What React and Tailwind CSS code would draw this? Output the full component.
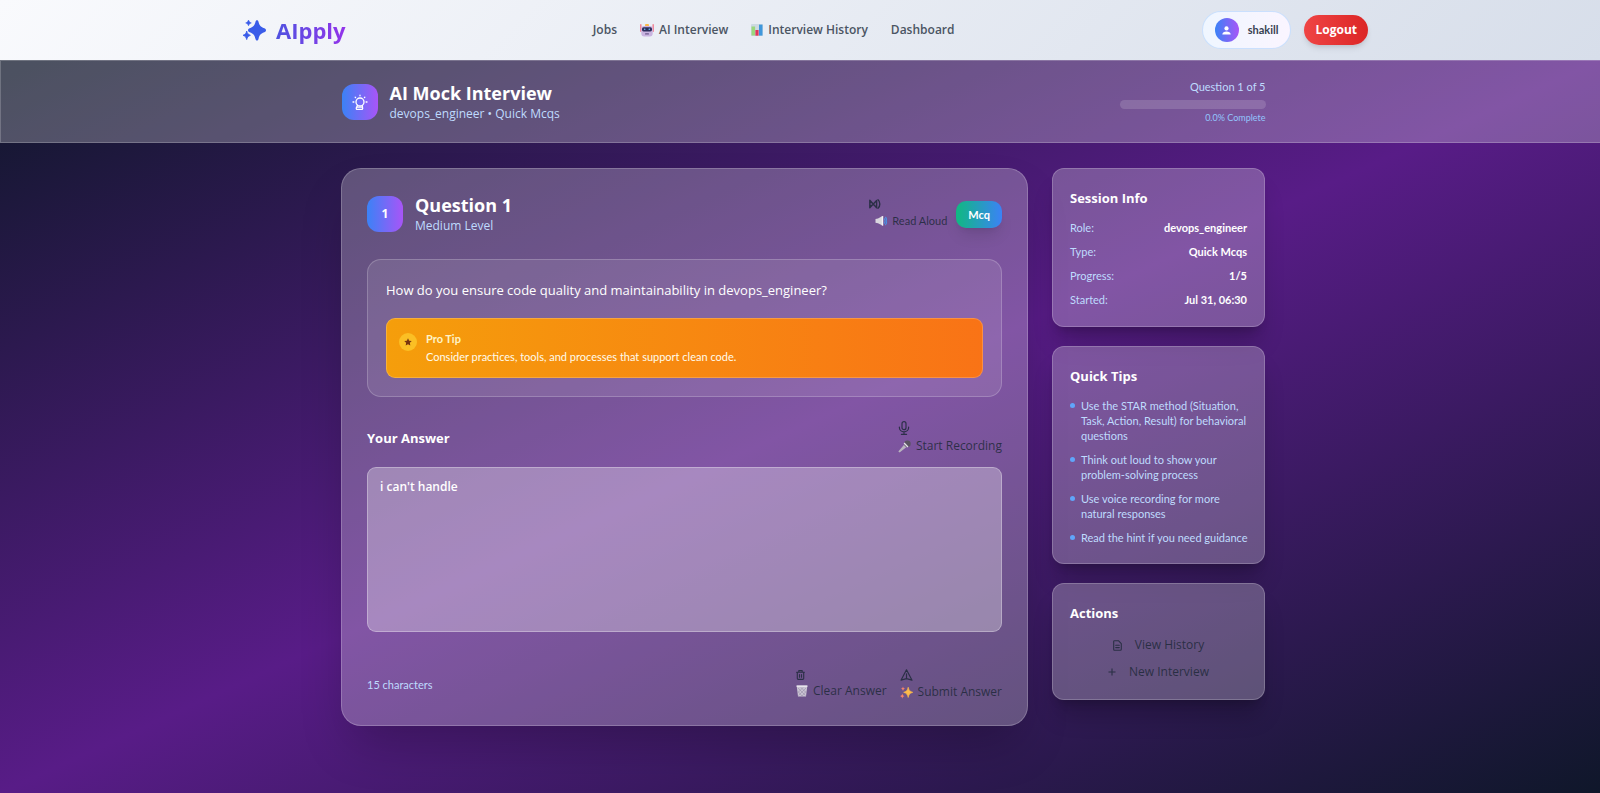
const panel = 'border border-white/20 bg-white/25';
const small = "font-['Lato','Open_Sans',sans-serif]";

function LogoIcon() {
  return (
    <svg className="h-[29px] w-[29px] text-[#3a5ce9]" viewBox="0 0 29 29" fill="currentColor" aria-hidden="true">
      <path d="M19 4.300c.9 0 1.300.7 1.500 1.500.9 3.700 1.900 4.900 5.800 6.500.9.400 1.700 1 1.700 2s-.8 1.600-1.700 2c-3.900 1.600-4.900 2.800-5.800 6.700-.2.800-.6 1.500-1.500 1.500s-1.300-.7-1.500-1.500c-.9-3.900-1.900-5.100-5.800-6.700-.9-.4-1.700-1-1.700-2s.8-1.600 1.700-2c3.900-1.600 4.900-2.800 5.800-6.500.2-.8.600-1.500 1.500-1.500z" />
      <path d="M10.500 4c.5 1.700 1 2.200 2.800 2.900-1.800.7-2.300 1.200-2.800 2.900-.5-1.700-1-2.200-2.800-2.900 1.800-.7 2.300-1.200 2.800-2.900z" stroke="currentColor" strokeWidth=".6" strokeLinejoin="round" />
      <path d="M8.700 15c.6 2.500 1.300 3.200 3.700 4.300-2.400 1-3.100 1.800-3.700 4.300-.6-2.500-1.300-3.300-3.700-4.300 2.400-1.100 3.100-1.800 3.700-4.300z" stroke="currentColor" strokeWidth=".8" strokeLinejoin="round" />
    </svg>
  );
}

function RobotEmoji() {
  return (
    <svg className="h-[14px] w-[14px]" viewBox="0 0 14 14" aria-hidden="true">
      <rect x="0" y="1" width="1.600" height="8" rx=".8" fill="#f08a9c" />
      <rect x="12.400" y="1" width="1.600" height="8" rx=".8" fill="#f08a9c" />
      <rect x="5" y="1" width="4" height="2.600" rx="1" fill="#fbb84a" />
      <rect x="1.300" y="3" width="11.400" height="10.600" rx="3" fill="#c9b3e0" />
      <rect x="2" y="4.200" width="10" height="4.200" rx="1.600" fill="#2c2f5c" />
      <circle cx="4.700" cy="6.300" r=".8" fill="#6fc3f5" />
      <circle cx="9.300" cy="6.300" r=".8" fill="#6fc3f5" />
      <rect x="5" y="10.200" width="4" height="1.400" rx=".6" fill="#6d5a8c" />
    </svg>
  );
}

function ChartEmoji() {
  return (
    <svg className="h-[12px] w-[12px]" viewBox="0 0 12 12" aria-hidden="true">
      <rect width="12" height="12" rx="1" fill="#cdd9e2" />
      <rect x=".5" y="2.500" width="3.600" height="9" fill="#9ad77c" />
      <rect x="4.400" y="6" width="3.200" height="5.700" fill="#e0355a" />
      <rect x="8" y=".6" width="3.500" height="11" fill="#3f97dc" />
    </svg>
  );
}

function SpeakerEmoji() {
  return (
    <svg className="h-[12px] w-[12px]" viewBox="0 0 12 12" aria-hidden="true">
      <path d="M.5 4 3 3.600 7.500 1v9.600L3 8.200.5 7.800z" fill="#d9d6de" />
      <path d="M6.800 1.200 8.200 1v9.800l-1.400-.2z" fill="#f3f1f6" />
      <path d="M9 3.500c1.200 1.300 1.200 3.600 0 5M10.300 2c2 2.200 2 5.800 0 8" fill="none" stroke="#4b8fe2" strokeWidth="1.200" />
    </svg>
  );
}

function MicEmoji() {
  return (
    <svg className="h-[13px] w-[13px]" viewBox="0 0 12 12" aria-hidden="true">
      <path d="M.3 10.600 6 4l2.200 2.200-6.700 5.400z" fill="#b9b4bf" />
      <circle cx="8.700" cy="3.400" r="3" fill="#5a5362" />
      <path d="m5.600 2.800 3.600 3.600" stroke="#e6e2ea" strokeWidth="1.200" />
    </svg>
  );
}

function BinEmoji() {
  return (
    <svg className="h-[12px] w-[12px]" viewBox="0 0 12 12" aria-hidden="true">
      <path d="M.6.500h10.800L10 11.500H2z" fill="#c9c3d2" />
      <path d="M.6 1.200h10.800" stroke="#eeeaf2" strokeWidth="1.300" />
      <path d="m2 3 7.500 7.500M5 2.500l5 5M2 6.500l4 4.500M10 3l-7.500 7.500M7 2.500l-5 5M10 6.500 6 11" stroke="#8f86a0" strokeWidth=".5" />
    </svg>
  );
}

function SparklesEmoji() {
  return (
    <svg className="h-[13px] w-[13px]" viewBox="0 0 13 13" aria-hidden="true">
      <path d="M8.200 1.200c.8 3.300 1.500 4 4.600 5.100-3.100 1.100-3.800 1.900-4.600 5.200-.8-3.300-1.500-4.100-4.600-5.200 3.100-1.100 3.800-1.800 4.600-5.100z" fill="#fdbb4a" stroke="#fdbb4a" strokeWidth=".6" strokeLinejoin="round" />
      <path d="M3 .5c.3 1.300.7 1.700 2 2.200-1.300.5-1.700.9-2 2.200-.3-1.300-.7-1.700-2-2.200C2.300 2.200 2.700 1.800 3 .5z" fill="#f5836b" />
      <path d="M2.300 7.500c.4 1.600.8 2 2.300 2.600-1.500.5-1.900 1-2.300 2.600-.4-1.600-.8-2.100-2.300-2.600 1.500-.6 1.900-1 2.300-2.600z" fill="#f5836b" />
    </svg>
  );
}

function BulbIcon() {
  return (
    <svg className="h-[18px] w-[18px]" viewBox="0 0 18 18" fill="none" stroke="white" strokeWidth="1.300" strokeLinecap="round" aria-hidden="true">
      <circle cx="9" cy="9" r="4" />
      <path d="M6.500 12.200 5.300 15c-.2 1 .2 1.400 1 1.400h4.300c.8 0 1.100-.5 1-1.200l-.3-2.900M6.200 14.100h4.600" />
      <path d="M9 2.200v.6M4.200 4.200l.4.400M13.800 4.200l-.4.400M2 9h.9M15.100 9h.9" />
    </svg>
  );
}

function MutedIcon() {
  return (
    <svg className="h-[12px] w-[12px]" viewBox="0 0 12 12" fill="none" stroke="currentColor" strokeWidth="1.400" strokeLinejoin="round" strokeLinecap="round" aria-hidden="true">
      <path d="M.8 2.300v7.400l6.800-7.200v7.200zM.8 4.500h2M.8 7.500h2M9 1.700c2.400 2 2.400 6.600 0 8.600" />
    </svg>
  );
}

function MicIcon() {
  return (
    <svg className="h-[14px] w-[12px]" viewBox="0 0 12 14" fill="none" stroke="currentColor" strokeWidth="1.200" strokeLinecap="round" aria-hidden="true">
      <rect x="4" y=".7" width="4" height="8" rx="2" />
      <path d="M1.400 6v.8a4.600 4 0 0 0 9.200 0V6M6 10.900v2.300M3.400 13.300h5.200" />
    </svg>
  );
}

function TrashIcon() {
  return (
    <svg className="h-[10px] w-[9px]" viewBox="0 0 9 10" fill="none" stroke="currentColor" strokeWidth="1.100" strokeLinecap="round" strokeLinejoin="round" aria-hidden="true">
      <path d="M.6 2.300h7.800M2.800 2.200V.6h3.400v1.600M1.300 2.500v6c0 .6.400.9.900.9h4.600c.5 0 .9-.3.900-.9v-6M3.500 4.500v2.800M5.500 4.500v2.800" />
    </svg>
  );
}

function SendIcon() {
  return (
    <svg className="h-[12px] w-[13px]" viewBox="0 0 13 12" fill="none" stroke="currentColor" strokeWidth="1.200" strokeLinejoin="round" strokeLinecap="round" aria-hidden="true">
      <path d="M6.500.8 12 11.200 6.500 9.600 1 11.200zM6.500 9.400V4.800" />
    </svg>
  );
}

function FileIcon() {
  return (
    <svg className="h-[11px] w-[9px]" viewBox="0 0 9 11" fill="none" stroke="currentColor" strokeWidth="1.100" strokeLinejoin="round" strokeLinecap="round" aria-hidden="true">
      <path d="M1.600.7h3.800l2.900 2.900v5.700c0 .6-.4 1-1 1H1.600c-.6 0-.9-.4-.9-1V1.600c0-.5.3-.9.900-.9zM2.700 5.300h3.600M2.700 7.600h3.600" />
    </svg>
  );
}

function PlusIcon() {
  return (
    <svg className="h-[8px] w-[8px]" viewBox="0 0 8 8" fill="none" stroke="currentColor" strokeWidth="1.100" aria-hidden="true">
      <path d="M4 .5v7M.5 4h7" />
    </svg>
  );
}

function StackedButton({ icon, emoji, label, className }) {
  return (
    <button type="button" className={`flex flex-col items-start gap-0.5 text-gray-800/85 ${className}`}>
      {icon}
      <span className="flex items-center gap-[5px] leading-[18px]">
        {emoji}
        {label}
      </span>
    </button>
  );
}

const session = [
  ['Role:', 'devops_engineer'],
  ['Type:', 'Quick Mcqs'],
  ['Progress:', '1/5'],
  ['Started:', 'Jul 31, 06:30'],
];

const tips = [
  'Use the STAR method (Situation, Task, Action, Result) for behavioral questions',
  'Think out loud to show your problem-solving process',
  'Use voice recording for more natural responses',
  'Read the hint if you need guidance',
];

function SideCard({ title, children }) {
  return (
    <section className={`rounded-xl px-[17px] pt-[19px] pb-[18px] shadow-xl shadow-black/20 ${panel}`}>
      <h3 className="text-[13px] leading-5 font-bold text-white">{title}</h3>
      {children}
    </section>
  );
}

export default function App() {
  return (
    <div className="flex min-h-screen flex-col font-['Open_Sans','Noto_Sans',sans-serif]">
      <header className="bg-linear-135/srgb from-[#f9fafd] to-[#d7deea] pl-1.5">
        <div className="mx-auto flex h-[60px] max-w-[1130px] items-center justify-between">
          <a href="#home" className="flex items-center gap-[9px]">
            <LogoIcon />
            <span className="bg-linear-to-r/srgb from-[#4f52e0] to-[#9333ea] bg-clip-text text-[22px] leading-8 font-bold text-transparent">AIpply</span>
          </a>
          <nav className="flex items-center gap-[23px] text-[12px] font-semibold text-[#4b5563]">
            <a href="#jobs">Jobs</a>
            <a href="#interview" className="flex items-center gap-[5px]"><RobotEmoji />AI Interview</a>
            <a href="#history" className="flex items-center gap-[5px]"><ChartEmoji />Interview History</a>
            <a href="#dashboard">Dashboard</a>
          </nav>
          <div className="flex items-center gap-[13px]">
            <div className="flex h-[38px] items-center gap-[9px] rounded-full border border-[#bfdbfe]/80 bg-linear-to-r/srgb from-[#eff6ff] to-[#faf5ff] px-3">
              <span className="flex h-6 w-6 items-center justify-center rounded-full bg-linear-to-r/srgb from-[#3b82f6] to-[#a855f7]">
                <svg className="h-[9px] w-[9px]" viewBox="0 0 9 9" fill="white" aria-hidden="true">
                  <circle cx="4.500" cy="2.400" r="2.100" />
                  <path d="M.3 8.500c0-2 2-3 4.200-3s4.200 1 4.200 3z" />
                </svg>
              </span>
              <span className={`text-[11px] font-bold text-[#374151] ${small}`}>shakill</span>
            </div>
            <button type="button" className="h-[30px] rounded-full bg-linear-to-r/srgb from-[#ef4444] to-[#dc2626] px-[11px] text-[12px] font-bold text-white shadow-md">Logout</button>
          </div>
        </div>
      </header>

      <div className="flex flex-1 flex-col bg-linear-to-br/srgb from-[#0f172a] via-[#581c87] to-[#0f172a]">
        <div className="border-y border-l border-white/20 bg-white/25 pl-1.5">
          <div className="mx-auto flex h-[81px] max-w-[924px] items-center justify-between">
            <div className="flex items-center gap-3">
              <div className="flex h-9 w-9 items-center justify-center rounded-xl bg-linear-to-r/srgb from-[#3b82f6] to-[#a855f7]">
                <BulbIcon />
              </div>
              <div>
                <h1 className="text-[18px] leading-6 font-bold text-white">AI Mock Interview</h1>
                <p className="text-[12px] leading-[18px] text-[#bfdbfe]">devops_engineer • Quick Mcqs</p>
              </div>
            </div>
            <div className={`flex w-[146px] flex-col items-end pb-0.5 ${small}`}>
              <p className="text-[11px] leading-[18px] text-[#bfdbfe]">Question 1 of 5</p>
              <div role="progressbar" aria-label="Interview progress" aria-valuenow={0} aria-valuemin={0} aria-valuemax={100} className="mt-1 mb-[3px] h-[9px] w-full rounded-full bg-white/15" />
              <p className="text-[9px] leading-3 text-[#93c5fd]">0.0% Complete</p>
            </div>
          </div>
        </div>

        <div className="pl-1.5">
          <main className="mx-auto flex max-w-[924px] items-start gap-6 pt-[25px] pb-[67px]">
            <section className={`min-w-0 flex-1 rounded-[20px] px-[25px] py-6 shadow-2xl ${panel}`}>
              <div className="flex items-center justify-between">
                <div className="flex items-center gap-3">
                  <div className="flex h-9 w-9 items-center justify-center rounded-xl bg-linear-to-r/srgb from-[#3b82f6] to-[#a855f7] text-[12px] font-bold text-white">1</div>
                  <div>
                    <h2 className="text-[18px] leading-6 font-bold text-white">Question 1</h2>
                    <p className="text-[12px] leading-[18px] text-[#bfdbfe]">Medium Level</p>
                  </div>
                </div>
                <div className="flex items-center gap-[9px]">
                  <StackedButton className={`text-[11px] ${small}`} icon={<MutedIcon />} emoji={<span className="pl-1.5"><SpeakerEmoji /></span>} label="Read Aloud" />
                  <span className={`rounded-[10px] bg-linear-to-r/srgb from-[#10b981] to-[#3b82f6] px-3 py-1 text-[11px] leading-[19px] font-bold text-white shadow-lg ${small}`}>Mcq</span>
                </div>
              </div>

              <div className="mt-6 rounded-[14px] border border-white/20 bg-white/10 p-[18px]">
                <p className="text-[13px] leading-6 text-white">How do you ensure code quality and maintainability in devops_engineer?</p>
                <div className={`mt-4 flex items-start gap-[9px] rounded-[9px] border border-white/20 bg-linear-to-r/srgb from-[#f59e0b] to-[#f97316] bg-origin-border px-3 py-[11px] ${small}`}>
                  <span className="mt-[3px] flex h-[18px] w-[18px] items-center justify-center rounded-full bg-[#fbbf24]">
                    <svg className="h-2 w-2" viewBox="0 0 10 10" fill="#78350f" aria-hidden="true">
                      <path d="m5 .3 1.450 3 3.250.4-2.400 2.300.6 3.300L5 7.700 2.100 9.300l.6-3.300L.3 3.700l3.250-.4z" />
                    </svg>
                  </span>
                  <div className="text-[11px] leading-[18px]">
                    <p className="font-bold text-[#fef3c7]">Pro Tip</p>
                    <p className="text-[#fffbeb]">Consider practices, tools, and processes that support clean code.</p>
                  </div>
                </div>
              </div>

              <div className="mt-6 flex items-center justify-between">
                <label htmlFor="answer" className="text-[13px] leading-5 font-bold text-white">Your Answer</label>
                <StackedButton className="text-[12px]" icon={<MicIcon />} emoji={<MicEmoji />} label="Start Recording" />
              </div>
              <textarea id="answer" defaultValue="i can't handle" className="mt-3 block h-[165px] w-full resize-none rounded-[9px] border border-white/30 bg-white/30 px-3 py-2.5 text-[12px] leading-[18px] font-semibold text-white outline-none" />
              <div className="mt-[37px] flex items-center justify-between">
                <p className={`text-[11px] leading-[18px] text-[#bfdbfe] ${small}`}>15 characters</p>
                <div className="flex items-center gap-[13px]">
                  <StackedButton className="text-[12px]" icon={<TrashIcon />} emoji={<BinEmoji />} label="Clear Answer" />
                  <StackedButton className="text-[12px]" icon={<SendIcon />} emoji={<SparklesEmoji />} label="Submit Answer" />
                </div>
              </div>
            </section>

            <aside className="flex w-[213px] shrink-0 flex-col gap-[19px]">
              <SideCard title="Session Info">
                <dl className={`mt-3 flex flex-col gap-2 text-[11px] leading-4 ${small}`}>
                  {session.map(([k, v]) => (
                    <div key={k} className="flex justify-between">
                      <dt className="text-[#bfdbfe]">{k}</dt>
                      <dd className="font-bold text-white">{v}</dd>
                    </div>
                  ))}
                </dl>
              </SideCard>
              <SideCard title="Quick Tips">
                <ul className={`mt-3 -mr-1 flex flex-col gap-[9px] text-[11px] leading-[15px] text-[#bfdbfe] ${small}`}>
                  {tips.map((t) => (
                    <li key={t} className="flex gap-1.5">
                      <span className="mt-[5px] h-[5px] w-[5px] shrink-0 rounded-full bg-[#60a5fa]" />
                      {t}
                    </li>
                  ))}
                </ul>
              </SideCard>
              <SideCard title="Actions">
                <div className="mt-[13px] flex flex-col items-center gap-[9px] text-[12px] leading-[18px] text-gray-800/85">
                  <button type="button" className="flex items-center gap-[13px]"><FileIcon />View History</button>
                  <button type="button" className="flex items-center gap-[13px]"><PlusIcon />New Interview</button>
                </div>
              </SideCard>
            </aside>
          </main>
        </div>
      </div>
    </div>
  );
}
